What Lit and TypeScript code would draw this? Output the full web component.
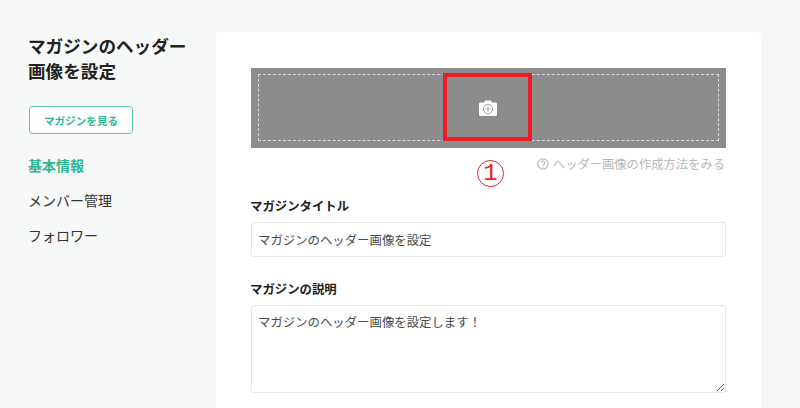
import { LitElement, html, css } from "lit";
import { customElement } from "lit/decorators.js";

@customElement("app-root")
export class AppRoot extends LitElement {
  static styles = css`
    :host {
      display: block;
      height: 408px;
      overflow: hidden;
      background: #f7f9f9;
      font-family: "Noto Sans CJK JP", "Noto Sans", sans-serif;
      color: #222;
    }
    .page {
      display: flex;
      align-items: flex-start;
      padding: 32px 39px 0 29px;
      position: relative;
    }
    .side {
      width: 187px;
      flex: none;
    }
    h1 {
      margin: 0 0 0 -1px;
      padding-top: 1px;
      font-size: 17.6px;
      line-height: 25px;
      font-weight: 700;
      color: #222;
    }
    .view {
      display: flex;
      align-items: center;
      justify-content: center;
      box-sizing: border-box;
      width: 104px;
      height: 28px;
      margin: 23px 0 21px;
      border: 1px solid #5fc9ae;
      border-radius: 4px;
      background: #fff;
      color: #2fb593;
      font-size: 10.6px;
      font-weight: 700;
    }
    nav {
      display: flex;
      flex-direction: column;
      gap: 15px;
      margin-left: -1px;
      font-size: 14px;
      line-height: 20px;
      color: #333;
    }
    nav .on {
      color: #2fb593;
      font-weight: 700;
    }
    .card {
      flex: 1;
      box-sizing: border-box;
      height: 420px;
      padding: 36px 35px 0;
      background: #fff;
      border-radius: 4px 4px 0 0;
    }
    .banner {
      box-sizing: border-box;
      height: 80px;
      padding: 6px 7px 7px;
      background: #8c8c8c;
    }
    .drop {
      display: flex;
      align-items: center;
      justify-content: center;
      box-sizing: border-box;
      height: 100%;
      border: 1px dashed #dcdcdc;
    }
    .drop svg {
      display: block;
      margin: 1px 2px 0 0;
    }
    .help {
      display: flex;
      align-items: center;
      justify-content: flex-end;
      gap: 4px;
      height: 18px;
      margin: 7px 1px 0 0;
      color: #b4b8ba;
      font-size: 12.3px;
    }
    label {
      display: block;
      margin-left: -1px;
      font-size: 12.4px;
      font-weight: 700;
      line-height: 18px;
      color: #222;
    }
    .title-label {
      margin-top: 24px;
    }
    .desc-label {
      margin-top: 23px;
    }
    input,
    textarea {
      display: block;
      box-sizing: border-box;
      width: 100%;
      margin: 7px 0 0;
      padding: 0 6px;
      border: 1px solid #e6e6e6;
      border-radius: 3px;
      background: #fff;
      color: #4a4a4a;
      font-family: inherit;
      font-size: 12.4px;
      outline: none;
    }
    input {
      height: 35px;
    }
    textarea {
      height: 88px;
      padding-top: 7px;
      line-height: 18px;
      resize: vertical;
    }
    .mark {
      position: absolute;
      left: 443px;
      top: 73px;
      box-sizing: border-box;
      width: 89px;
      height: 68px;
      border: 4px solid #ee1c25;
    }
    .num {
      position: absolute;
      left: 477px;
      top: 160px;
      display: flex;
      align-items: center;
      justify-content: center;
      box-sizing: border-box;
      width: 27px;
      height: 27px;
      border: 1px solid #ee1c25;
      border-radius: 50%;
      color: #ee1c25;
      font-family: "Liberation Mono", monospace;
      font-size: 24px;
      line-height: 1;
    }
  `;

  render() {
    return html`
      <div class="page">
        <aside class="side">
          <h1>マガジンのヘッダー<br />画像を設定</h1>
          <div class="view">マガジンを見る</div>
          <nav>
            <span class="on">基本情報</span>
            <span>メンバー管理</span>
            <span>フォロワー</span>
          </nav>
        </aside>
        <main class="card">
          <div class="banner">
            <div class="drop">
              <svg width="18" height="16" viewBox="0 0 18 16">
                <path
                  fill="#fff"
                  d="M1.5 2.5H5L6 .6h6l1 1.9h3.5A1.5 1.5 0 0 1 18 4v10.5a1.5 1.5 0 0 1-1.5 1.5h-15A1.5 1.5 0 0 1 0 14.5V4a1.5 1.5 0 0 1 1.5-1.5z"
                />
                <circle cx="9" cy="9" r="4.6" fill="none" stroke="#a8a8a8" stroke-width="1" />
                <path d="M9 6.6v4.8M6.6 9h4.8" stroke="#a8a8a8" stroke-width="1" fill="none" />
              </svg>
            </div>
          </div>
          <div class="help">
            <svg width="12" height="12" viewBox="0 0 12 12">
              <circle cx="6" cy="6" r="5.2" fill="none" stroke="#b4b8ba" stroke-width="1.2" />
              <path
                d="M4.3 4.8a1.7 1.7 0 1 1 2.6 1.4c-.6.4-.9.7-.9 1.3"
                fill="none"
                stroke="#b4b8ba"
                stroke-width="1.1"
              />
              <circle cx="6" cy="9.1" r=".7" fill="#b4b8ba" />
            </svg>
            <span>ヘッダー画像の作成方法をみる</span>
          </div>
          <label class="title-label">マガジンタイトル</label>
          <input type="text" .value=${"マガジンのヘッダー画像を設定"} />
          <label class="desc-label">マガジンの説明</label>
          <textarea .value=${"マガジンのヘッダー画像を設定します！"}></textarea>
        </main>
        <div class="mark"></div>
        <div class="num">1</div>
      </div>
    `;
  }
}
